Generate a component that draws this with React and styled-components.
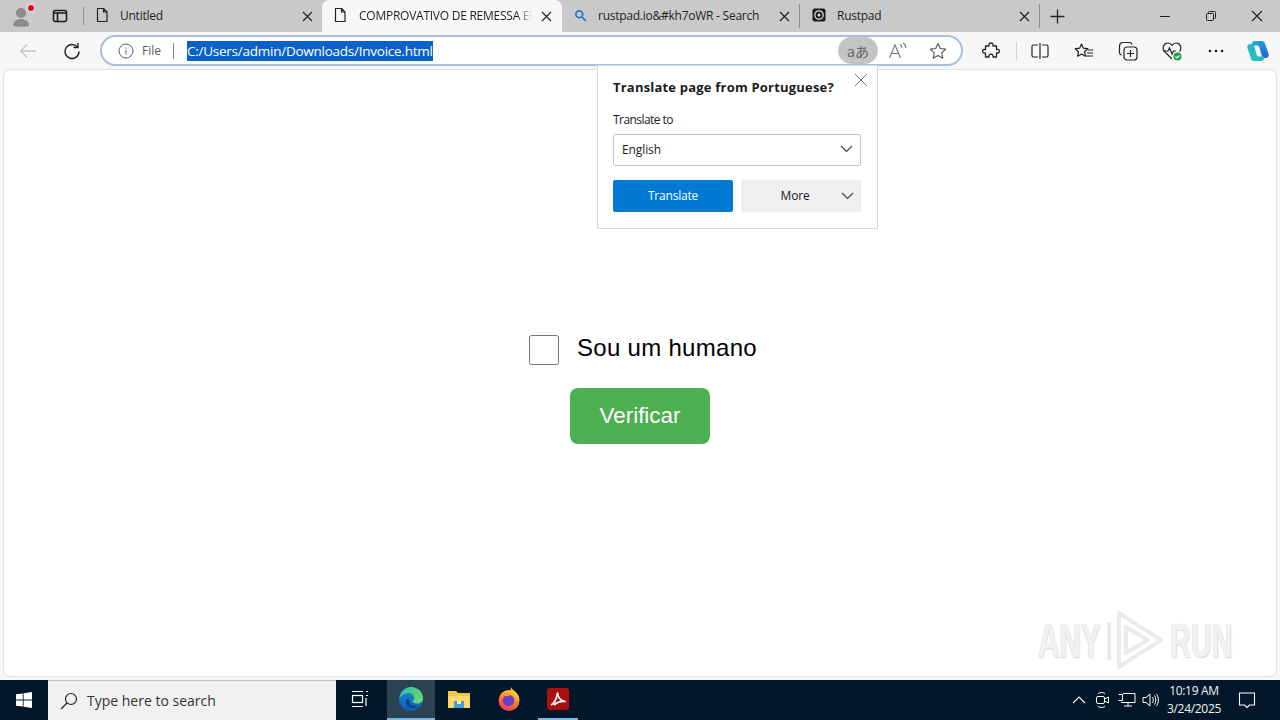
import React from "react";
import styled, { createGlobalStyle } from "styled-components";

const GlobalStyle = createGlobalStyle`
  html, body {
    margin: 0;
    padding: 0;
    width: 1280px;
    height: 720px;
    overflow: hidden;
    font-family: "Open Sans", "Noto Sans", sans-serif;
  }
`;

const Screen = styled.div`
  width: 1280px;
  height: 720px;
  display: flex;
  flex-direction: column;
  background: #f7f7f7;
`;

const TabStrip = styled.div`
  height: 32px;
  flex: none;
  display: flex;
  align-items: stretch;
  background: #c9c9c9;
  color: #1f1f1f;
`;

const StripIcon = styled.div`
  width: ${(p) => p.$w}px;
  flex: none;
  display: flex;
  align-items: center;
  justify-content: center;
  position: relative;
`;

const StripDivider = styled.div`
  width: 8px;
  flex: none;
  display: flex;
  align-items: center;
  justify-content: flex-end;
  &::after {
    content: "";
    width: 1px;
    height: 18px;
    background: #8f8f8f;
  }
`;

const NotifyDot = styled.span`
  position: absolute;
  top: 5px;
  left: 28px;
  width: 6px;
  height: 6px;
  border-radius: 50%;
  background: #e3001b;
  box-shadow: 0 0 0 1px #e9e9e9;
`;

const Tab = styled.div`
  width: ${(p) => p.$w}px;
  flex: none;
  box-sizing: border-box;
  display: flex;
  align-items: center;
  padding: 0 ${(p) => (p.$active ? 8 : 7)}px 2px ${(p) => p.$left || 10}px;
  font-size: 12px;
  letter-spacing: -0.25px;
  background: ${(p) => (p.$active ? "#f7f7f7" : "transparent")};
  border-radius: ${(p) => (p.$active ? "7px 7px 0 0" : "0")};
  border-right: ${(p) => (p.$divider ? "1px solid #8f8f8f" : "none")};
  margin: ${(p) => (p.$active ? "0" : "4px 0")};
  height: ${(p) => (p.$active ? "32px" : "24px")};
`;

const TabIcon = styled.span`
  width: 16px;
  height: 16px;
  flex: none;
  display: flex;
  align-items: center;
  justify-content: center;
  margin-right: 10px;
`;

const TabTitle = styled.span`
  flex: 1;
  min-width: 0;
  white-space: nowrap;
  margin-left: ${(p) => (p.$fade ? 1 : 0)}px;
  -webkit-mask-image: ${(p) =>
    p.$fade ? "linear-gradient(to right, #000 88%, transparent 97%)" : "none"};
`;

const TabClose = styled.span`
  width: 16px;
  height: 16px;
  flex: none;
  margin-top: 2px;
  display: flex;
  align-items: center;
  justify-content: center;
`;

const StripSpacer = styled.div`
  flex: 1;
`;

const WindowBtn = styled.div`
  width: 46px;
  flex: none;
  display: flex;
  align-items: center;
  justify-content: center;
`;

const Toolbar = styled.div`
  height: 38px;
  flex: none;
  display: flex;
  align-items: center;
  background: #f7f7f7;
`;

const ToolBtn = styled.div`
  width: ${(p) => p.$w || 44}px;
  margin-left: ${(p) => p.$gap || 0}px;
  height: 30px;
  flex: none;
  display: flex;
  align-items: center;
  justify-content: center;
`;

const AddressBar = styled.div`
  width: 863px;
  height: 31px;
  margin: 0 0 1px 12px;
  box-sizing: border-box;
  flex: none;
  display: flex;
  align-items: center;
  background: #fff;
  border: 2px solid #a9bfdc;
  border-radius: 16px;
  padding: 0 3px 0 16px;
`;

const SchemeText = styled.span`
  font-size: 12px;
  color: #5a5a5a;
  margin-left: 8px;
`;

const AddressDivider = styled.span`
  width: 1px;
  height: 16px;
  background: #8a8a8a;
  margin: 0 13px 0 12px;
`;

const SelectedUrl = styled.span`
  font-size: 13.5px;
  line-height: 20px;
  color: #fff;
  background: #0b62c4;
  letter-spacing: -0.25px;
  white-space: nowrap;
`;

const AddressActions = styled.div`
  margin-left: auto;
  display: flex;
  align-items: center;
`;

const TranslatePill = styled.div`
  width: 40px;
  height: 27px;
  border-radius: 14px;
  background: #c4c4c4;
  color: #666;
  font-size: 14px;
  display: flex;
  align-items: center;
  justify-content: center;
  font-family: "Noto Sans CJK JP", "Open Sans", sans-serif;
`;

const AddressAction = styled.div`
  width: 40px;
  height: 26px;
  display: flex;
  align-items: center;
  justify-content: center;
`;

const ToolSeparator = styled.span`
  width: 1px;
  height: 18px;
  background: #d5d5d5;
  flex: none;
`;

const Viewport = styled.main`
  flex: 1;
  margin: 0 4px;
  background: #fff;
  border-radius: 6px;
  box-shadow: 0 0 2px rgba(0, 0, 0, 0.28);
  position: relative;
  display: flex;
  flex-direction: column;
  align-items: center;
  padding-top: 265px;
  box-sizing: border-box;
`;

const HumanRow = styled.label`
  display: flex;
  align-items: center;
  gap: 18px;
  height: 30px;
  margin-left: 6px;
`;

const HumanCheck = styled.input.attrs({ type: "checkbox" })`
  appearance: none;
  width: 30px;
  height: 30px;
  margin: 0;
  background: #fff;
  border: 1px solid #767676;
  border-radius: 2.5px;
  box-sizing: border-box;
`;

const HumanLabel = styled.span`
  font-family: "Liberation Sans", Arial, sans-serif;
  font-size: 24px;
  letter-spacing: 0.3px;
  color: #000;
  margin-bottom: 4px;
`;

const VerifyButton = styled.button`
  width: 140px;
  height: 56px;
  margin-top: 23px;
  border: none;
  border-radius: 8px;
  background: #4caf50;
  color: #fff;
  font-family: "Liberation Sans", Arial, sans-serif;
  font-size: 22.4px;
  padding: 0;
`;

const Popup = styled.section`
  position: absolute;
  left: 593px;
  top: -5px;
  width: 281px;
  height: 164px;
  box-sizing: border-box;
  background: #fff;
  border: 1px solid #d6d6d6;
  padding: 13px 16px 0 15px;
  color: #1b1b1b;
`;

const PopupTitle = styled.div`
  font-size: 13px;
  font-weight: 700;
  line-height: 17px;
  letter-spacing: 0.2px;
  white-space: nowrap;
`;

const PopupClose = styled.span`
  position: absolute;
  right: 9px;
  top: 7px;
  display: flex;
`;

const FieldLabel = styled.div`
  font-size: 12px;
  line-height: 16px;
  margin-top: 16px;
  letter-spacing: -0.55px;
`;

const LangSelect = styled.div`
  height: 32px;
  margin-top: 6px;
  box-sizing: border-box;
  border: 1px solid #c4c4c4;
  border-radius: 2px;
  display: flex;
  align-items: center;
  justify-content: space-between;
  padding: 0 7px 2px 8px;
  font-size: 12px;
  letter-spacing: -0.1px;
`;

const PopupActions = styled.div`
  display: flex;
  gap: 8px;
  margin-top: 14px;
`;

const PopupButton = styled.div`
  width: 120px;
  height: 32px;
  border-radius: 2px;
  display: flex;
  align-items: center;
  justify-content: center;
  position: relative;
  box-sizing: border-box;
  font-size: 12px;
  letter-spacing: -0.2px;
  padding: ${(p) => (p.$primary ? "0 0 2px" : "0 12px 2px 0")};
  background: ${(p) => (p.$primary ? "#0078d4" : "#efefef")};
  color: ${(p) => (p.$primary ? "#fff" : "#1b1b1b")};
`;

const MoreCaret = styled.span`
  position: absolute;
  right: 7px;
  top: 12px;
  display: flex;
`;

const Watermark = styled.div`
  position: absolute;
  right: 44px;
  bottom: 6px;
  height: 60px;
  display: flex;
  align-items: center;
  gap: 5px;
  pointer-events: none;
  color: #f1f1f1;
  font-family: "Liberation Sans", Arial, sans-serif;
  font-size: 48px;
  font-weight: 700;
  text-shadow: 1px 1px 2px #d4d4d4, -1px 0 1px #e4e4e4;
`;

const WatermarkWord = styled.span`
  display: inline-block;
  width: 62px;
  transform: scaleX(${(p) => p.$scale});
  transform-origin: left center;
`;

const Taskbar = styled.footer`
  height: 40px;
  margin-top: 4px;
  flex: none;
  display: flex;
  align-items: stretch;
  background: #02182a;
  color: #fff;
`;

const StartBtn = styled.div`
  width: 48px;
  flex: none;
  display: flex;
  align-items: center;
  justify-content: center;
`;

const SearchBox = styled.div`
  width: 288px;
  flex: none;
  box-sizing: border-box;
  background: #f1f1f1;
  border-top: 1px solid #bdbdbd;
  display: flex;
  align-items: center;
  padding-left: 12px;
  gap: 9px;
  color: #333;
  font-size: 14px;
`;

const TaskIcon = styled.div`
  width: ${(p) => p.$w || 48}px;
  flex: none;
  box-sizing: border-box;
  display: flex;
  align-items: center;
  justify-content: center;
  background: ${(p) => (p.$active ? "#2d4250" : "transparent")};
  border-bottom: 2px solid ${(p) => (p.$open ? "#7ab8e8" : "transparent")};
  margin-left: ${(p) => p.$gap || 0}px;
`;

const Tray = styled.div`
  margin-left: auto;
  padding-right: 11px;
  display: flex;
  align-items: center;
`;

const TrayIcon = styled.div`
  width: ${(p) => p.$w || 24}px;
  display: flex;
  align-items: center;
  justify-content: center;
`;

const Clock = styled.div`
  width: 62px;
  text-align: center;
  font-size: 12px;
  line-height: 18px;
  letter-spacing: -0.3px;
  color: #f2f2f2;
`;

const Stroke = ({ size = 16, children, color = "#222", width = 1.2, box = 16 }) => (
  <svg width={size} height={size} viewBox={`0 0 ${box} ${box}`} fill="none" stroke={color} strokeWidth={width}>
    {children}
  </svg>
);

const PageIcon = () => (
  <Stroke>
    <path d="M3.5 1.5h6l3.5 3.5v9.5h-9.5z M9.5 1.5v3.5h3.5" strokeLinejoin="round" />
  </Stroke>
);

const CloseIcon = ({ size = 11, color = "#222", width = 1.2 }) => (
  <Stroke size={size} box={size} color={color} width={width}>
    <path d={`M1 1L${size - 1} ${size - 1}M${size - 1} 1L1 ${size - 1}`} />
  </Stroke>
);

const Chevron = ({ color = "#444" }) => (
  <svg width="13" height="8" viewBox="0 0 13 8" fill="none" stroke={color} strokeWidth="1.2">
    <path d="M1 1l5.5 5.5L12 1" />
  </svg>
);

const CopilotIcon = () => (
  <svg width="24" height="24" viewBox="0 0 24 24">
    <defs>
      <linearGradient id="cpA" x1="0" y1="0" x2="1" y2="1">
        <stop offset="0" stopColor="#1fb6d8" />
        <stop offset="1" stopColor="#1d5fd0" />
      </linearGradient>
      <linearGradient id="cpB" x1="0" y1="1" x2="1" y2="0">
        <stop offset="0" stopColor="#27c9a8" />
        <stop offset="1" stopColor="#2aa4ee" />
      </linearGradient>
    </defs>
    <path d="M8 2h8c1.5 0 2.4 1 2.9 2.3L22.6 15c.6 2-.8 4-3 4h-3.2l-3-10.5C13 7 12 6.5 10.8 6.5H5.5L6 4.2C6.3 3 7 2 8 2z" fill="url(#cpA)" />
    <path d="M16 22H8c-1.5 0-2.4-1-2.9-2.3L1.4 9C.8 7 2.2 5 4.4 5h3.2l3 10.5c.4 1.5 1.4 2 2.6 2h5.3L18 19.8C17.7 21 17 22 16 22z" fill="url(#cpB)" />
  </svg>
);

const EdgeIcon = () => (
  <svg width="26" height="26" viewBox="0 0 26 26">
    <defs>
      <linearGradient id="edA" x1="0" y1="0" x2="1" y2="1">
        <stop offset="0" stopColor="#35c1a0" />
        <stop offset="1" stopColor="#6fdc6a" />
      </linearGradient>
      <linearGradient id="edB" x1="0" y1="0" x2="0" y2="1">
        <stop offset="0" stopColor="#1a8fd8" />
        <stop offset="1" stopColor="#0c5cab" />
      </linearGradient>
    </defs>
    <circle cx="13" cy="13" r="12" fill="url(#edB)" />
    <path d="M1.5 12C3 5.5 8 1 13 1c6.5 0 12 5 12 11.5 0 3.5-3 5-6 5-2.5 0-4.5-1-4.5-2 0-.6 1.5-1 1.5-3.5 0-3-2.5-5-5.5-5S4 8.5 1.5 12z" fill="url(#edA)" />
    <path d="M8 15c0 4 3 7 6.5 7 2.5 0 4.5-.8 6-2-4 1-8.5-.5-9.5-4-.4-1.5-.5-3-.3-4C9 12.8 8 13.8 8 15z" fill="#0a3f86" />
  </svg>
);

const FolderIcon = () => (
  <svg width="24" height="22" viewBox="0 0 24 22">
    <path d="M1 3h8l2 2h12v15H1z" fill="#f2c94c" />
    <path d="M1 8h22v12H1z" fill="#ffd968" />
    <path d="M7 13h10v7H7z" fill="#3fa0d8" />
    <path d="M10 13h4v3h-4z" fill="#f7e7a8" />
  </svg>
);

const FirefoxIcon = () => (
  <svg width="26" height="26" viewBox="0 0 26 26">
    <defs>
      <linearGradient id="ffA" x1="0.7" y1="0" x2="0.3" y2="1">
        <stop offset="0" stopColor="#ffd430" />
        <stop offset="0.5" stopColor="#ff7a2a" />
        <stop offset="1" stopColor="#f0355f" />
      </linearGradient>
    </defs>
    <circle cx="13" cy="14.5" r="10.5" fill="url(#ffA)" />
    <path d="M15 1c1 3 5 4 7 8 1 2 1.5 4 1 6L17 8c-2-2-3-4-2-7z" fill="#ffc02e" />
    <circle cx="12.5" cy="14.5" r="5.8" fill="#6d3fc4" />
    <path d="M7 9c2-2 6-3 8-1l-3 2.5z" fill="#ff9a2e" />
  </svg>
);

const AcrobatIcon = () => (
  <svg width="22" height="22" viewBox="0 0 22 22">
    <rect width="22" height="22" rx="3" fill="#a80f0f" />
    <path d="M4 17c3-1.5 5.5-6 6.5-12 .3 4 3 7.5 7.5 8.5-4-.3-8 .8-11 3.5" fill="none" stroke="#fff" strokeWidth="1.7" strokeLinejoin="round" />
  </svg>
);

const WatermarkMark = () => (
  <svg width="60" height="60" viewBox="0 0 60 60" fill="none" stroke="#ebebeb" strokeWidth="4" strokeLinejoin="round">
    <path d="M4 12v38M14 3l42 27-42 27z" />
    <path d="M21 17l22 13-22 13z" />
  </svg>
);

export default function App() {
  return (
    <Screen>
      <GlobalStyle />
      <TabStrip>
        <StripIcon $w={44}>
          <svg width="24" height="24" viewBox="0 0 24 24" fill="#8c8c8c">
            <circle cx="11" cy="9" r="5" />
            <path d="M3 22c0-5 3.5-7 8-7s8 2 8 7c-2 1-14 1-16 0z" />
          </svg>
          <NotifyDot />
        </StripIcon>
        <StripIcon $w={32}>
          <Stroke width={1.6} color="#1c1c1c">
            <rect x="1.5" y="2.5" width="13" height="11" rx="1.5" />
            <path d="M2 5h12M5.5 5v8" />
          </Stroke>
        </StripIcon>
        <StripDivider />
        <Tab $w={238}>
          <TabIcon><PageIcon /></TabIcon>
          <TabTitle>Untitled</TabTitle>
          <TabClose><CloseIcon /></TabClose>
        </Tab>
        <Tab $w={240} $active>
          <TabIcon><PageIcon /></TabIcon>
          <TabTitle $fade>COMPROVATIVO DE REMESSA EF</TabTitle>
          <TabClose><CloseIcon /></TabClose>
        </Tab>
        <Tab $w={238} $divider>
          <TabIcon>
            <Stroke size={13} color="#2a76c6" width={2.2}>
              <circle cx="6.5" cy="6.5" r="4.2" />
              <path d="M10 10l4.5 4.5" />
            </Stroke>
          </TabIcon>
          <TabTitle>rustpad.io&amp;#kh7oWR - Search</TabTitle>
          <TabClose><CloseIcon /></TabClose>
        </Tab>
        <Tab $w={240} $divider $left={11}>
          <TabIcon>
            <svg width="14" height="14" viewBox="0 0 14 14">
              <rect x="0.5" y="0.5" width="13" height="13" rx="2" fill="#1a1a1a" />
              <circle cx="7" cy="7" r="4.2" fill="none" stroke="#ddd" strokeWidth="1.3" />
              <circle cx="7" cy="7" r="1.5" fill="#ddd" />
            </svg>
          </TabIcon>
          <TabTitle>Rustpad</TabTitle>
          <TabClose><CloseIcon /></TabClose>
        </Tab>
        <StripIcon $w={34}>
          <Stroke size={15} box={15} width={1.3}>
            <path d="M7.5 0.5v14M0.5 7.5h14" />
          </Stroke>
        </StripIcon>
        <StripSpacer />
        <WindowBtn>
          <Stroke size={10} box={10} width={1}><path d="M0 5.5h10" /></Stroke>
        </WindowBtn>
        <WindowBtn>
          <Stroke size={10} box={10} width={1}>
            <rect x="0.5" y="2.5" width="7" height="7" rx="1" />
            <path d="M2.5 2.5v-1a1 1 0 0 1 1-1h5a1 1 0 0 1 1 1v5a1 1 0 0 1-1 1h-1" />
          </Stroke>
        </WindowBtn>
        <WindowBtn>
          <CloseIcon size={12} />
        </WindowBtn>
      </TabStrip>

      <Toolbar>
        <ToolBtn $w={56}>
          <Stroke size={18} box={18} color="#c8c8c8" width={1.3}>
            <path d="M17 9H1.5M8 2.5L1.5 9 8 15.5" />
          </Stroke>
        </ToolBtn>
        <ToolBtn $w={32}>
          <Stroke size={18} box={18} color="#222" width={1.4}>
            <path d="M14.5 5.2A7 7 0 1 0 16 9.5" />
            <path d="M15 1v4.5h-4.5" />
          </Stroke>
        </ToolBtn>
        <AddressBar>
          <Stroke size={16} color="#5f5f5f" width={1}>
            <circle cx="8" cy="8" r="7" />
            <path d="M8 7v4.5M8 4.5v1.2" />
          </Stroke>
          <SchemeText>File</SchemeText>
          <AddressDivider />
          <SelectedUrl>C:/Users/admin/Downloads/Invoice.html</SelectedUrl>
          <AddressActions>
            <TranslatePill>aあ</TranslatePill>
            <AddressAction>
              <svg width="20" height="18" viewBox="0 0 20 18" fill="none" stroke="#777" strokeWidth="1.1">
                <path d="M1.5 16L7 3l5.5 13M3.5 11.5h7" />
                <path d="M12 2.5c1.5.8 2 2 2 3.5M15 1c2 1.2 3 3 3 5" />
              </svg>
            </AddressAction>
            <AddressAction>
              <svg width="18" height="18" viewBox="0 0 18 18" fill="none" stroke="#555" strokeWidth="1.1" strokeLinejoin="round">
                <path d="M9 1.5l2.3 5 5.4.6-4 3.7 1.1 5.4L9 13.4l-4.8 2.8 1.1-5.4-4-3.7 5.4-.6z" />
              </svg>
            </AddressAction>
          </AddressActions>
        </AddressBar>
        <ToolBtn $w={50} $gap={3}>
          <svg width="18" height="18" viewBox="0 0 18 18" fill="none" stroke="#222" strokeWidth="1.3" strokeLinejoin="round">
            <path d="M7 2.5c0-2 4-2 4 0V4h3.5v3.5c2-.5 3 .8 3 1.7s-1 2.3-3 1.8V15H11c.4-2-.8-2.8-2-2.8S6.600 13 7 15H3.500v-4C1.500 11.500.5 10 .5 9.200S1.500 7 3.500 7.500V4H7z" />
          </svg>
        </ToolBtn>
        <ToolSeparator />
        <ToolBtn $w={45}>
          <Stroke size={18} box={18} width={1.2}>
            <path d="M7 3H2.500a1.500 1.500 0 0 0-1.500 1.500v9A1.500 1.500 0 0 0 2.500 15H7M11 3h4.500A1.500 1.500 0 0 1 17 4.500v9a1.500 1.500 0 0 1-1.500 1.500H11M9 1v16" />
          </Stroke>
        </ToolBtn>
        <ToolBtn>
          <svg width="20" height="18" viewBox="0 0 20 18" fill="none" stroke="#222" strokeWidth="1.2" strokeLinejoin="round">
            <path d="M7.500 2l1.900 4.200 4.400.5-3.300 3 .9 4.500-3.900-2.300-3.900 2.300.9-4.500-3.300-3 4.400-.5z" />
            <path d="M14 8h5M13 11h6M12 14h7" />
          </svg>
        </ToolBtn>
        <ToolBtn>
          <svg width="20" height="20" viewBox="0 0 20 20" fill="none" stroke="#222" strokeWidth="1.2">
            <rect x="6" y="6" width="13" height="13" rx="3" />
            <path d="M12.500 9v7M9 12.500h7" />
            <path d="M14 3.500A2.500 2.500 0 0 0 11.500 1.500H5A3.500 3.500 0 0 0 1.500 5v6.500A2.500 2.500 0 0 0 3.500 14" />
          </svg>
        </ToolBtn>
        <ToolBtn>
          <svg width="20" height="20" viewBox="0 0 20 20" fill="none" stroke="#222" strokeWidth="1.2">
            <path d="M10 18L2.500 10.500C-.5 7 2 2 5.800 2 7.800 2 9 3 10 4.300 11 3 12.200 2 14.200 2c3.800 0 6.300 5 3.300 8.500" />
            <path d="M1 10h5l1.500-3 2.500 6 1.500-3H14" />
            <circle cx="15.5" cy="15.5" r="4" fill="#18a04a" stroke="none" />
            <path d="M13.5 15.5l1.500 1.500 2.500-2.500" stroke="#fff" />
          </svg>
        </ToolBtn>
        <ToolBtn>
          <svg width="16" height="4" viewBox="0 0 16 4" fill="#222">
            <circle cx="2" cy="2" r="1.3" />
            <circle cx="8" cy="2" r="1.3" />
            <circle cx="14" cy="2" r="1.3" />
          </svg>
        </ToolBtn>
        <ToolBtn $w={40}>
          <CopilotIcon />
        </ToolBtn>
      </Toolbar>

      <Viewport>
        <HumanRow>
          <HumanCheck />
          <HumanLabel>Sou um humano</HumanLabel>
        </HumanRow>
        <VerifyButton>Verificar</VerifyButton>

        <Popup>
          <PopupTitle>Translate page from Portuguese?</PopupTitle>
          <PopupClose><CloseIcon size={14} color="#777" width={1} /></PopupClose>
          <FieldLabel>Translate to</FieldLabel>
          <LangSelect>
            English
            <Chevron />
          </LangSelect>
          <PopupActions>
            <PopupButton $primary>Translate</PopupButton>
            <PopupButton>
              More
              <MoreCaret><Chevron /></MoreCaret>
            </PopupButton>
          </PopupActions>
        </Popup>

        <Watermark>
          <WatermarkWord $scale={0.62}>ANY</WatermarkWord>
          <WatermarkMark />
          <WatermarkWord $scale={0.6}>RUN</WatermarkWord>
        </Watermark>
      </Viewport>

      <Taskbar>
        <StartBtn>
          <svg width="16" height="16" viewBox="0 0 16 16" fill="#fff">
            <path d="M0 2.3l6.8-.9v6.2H0zM7.6 1.300L16 0v7.600H7.600zM0 8.400h6.800v6.200L0 13.700zM7.600 8.400H16V16l-8.400-1.200z" />
          </svg>
        </StartBtn>
        <SearchBox>
          <Stroke size={18} box={18} color="#222" width={1.2}>
            <circle cx="11" cy="7" r="5.5" />
            <path d="M7 11l-6 6" />
          </Stroke>
          Type here to search
        </SearchBox>
        <TaskIcon>
          <svg width="18" height="18" viewBox="0 0 18 18" fill="none" stroke="#fff" strokeWidth="1.2">
            <path d="M1 1.500h11M1 16.500h11" />
            <rect x="1.5" y="5.5" width="10" height="7" />
            <path d="M15 1.500h2M15 5.500h2M15 8v8" />
          </svg>
        </TaskIcon>
        <TaskIcon $active $open $gap={3}><EdgeIcon /></TaskIcon>
        <TaskIcon><FolderIcon /></TaskIcon>
        <TaskIcon $gap={2}><FirefoxIcon /></TaskIcon>
        <TaskIcon $w={40} $gap={5} $open><AcrobatIcon /></TaskIcon>
        <Tray>
          <TrayIcon>
            <Stroke size={14} box={14} color="#fff" width={1.1}><path d="M1 10l6-6 6 6" /></Stroke>
          </TrayIcon>
          <TrayIcon>
            <svg width="16" height="18" viewBox="0 0 16 18" fill="none" stroke="#fff" strokeWidth="1">
              <rect x="1.5" y="5.5" width="8" height="7" rx="1.5" />
              <path d="M9.500 8l4-2v6l-4-2M3 2.500c2-1.300 5-1.300 7 0M3 15.500c2 1.300 5 1.300 7 0" />
            </svg>
          </TrayIcon>
          <TrayIcon>
            <svg width="18" height="16" viewBox="0 0 18 16" fill="none" stroke="#fff" strokeWidth="1">
              <path d="M5 1.500h12v9H3M10 10.500v3M6 14h8M.5 2.500h4v6h-4" />
            </svg>
          </TrayIcon>
          <TrayIcon>
            <svg width="18" height="16" viewBox="0 0 18 16" fill="none" stroke="#fff" strokeWidth="1">
              <path d="M1 5.500h3L8 2v12l-4-3.500H1zM10.500 5c1 1.500 1 4.500 0 6M12.500 3.500c1.800 2.500 1.800 6.500 0 9M14.500 2c2.500 3.500 2.500 8.500 0 12" />
            </svg>
          </TrayIcon>
          <Clock>
            10:19 AM
            <br />
            3/24/2025
          </Clock>
          <TrayIcon $w={44}>
            <svg width="18" height="18" viewBox="0 0 18 18" fill="none" stroke="#fff" strokeWidth="1.1">
              <path d="M1.500 2h15v12h-5L9 16.500 6.500 14h-5z" />
            </svg>
          </TrayIcon>
        </Tray>
      </Taskbar>
    </Screen>
  );
}
